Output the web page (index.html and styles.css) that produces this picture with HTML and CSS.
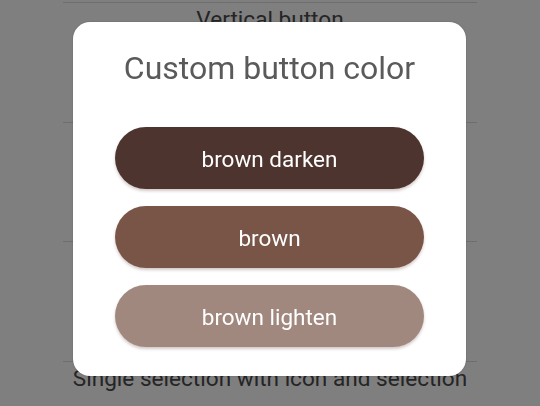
FILE: index.html
```html
<!DOCTYPE html>
<html>
<head>
<meta charset="utf-8">
<link rel="stylesheet" href="styles.css">
</head>
<body>
<div class="page">
  <ul class="list">
    <li class="item">Vertical button</li>
    <li class="item"></li>
    <li class="item"></li>
    <li class="item">Single selection with icon and selection</li>
  </ul>
</div>
<div class="overlay">
  <div class="dialog">
    <h1 class="title">Custom button color</h1>
    <div class="buttons">
      <button class="btn btn-darken">brown darken</button>
      <button class="btn btn-base">brown</button>
      <button class="btn btn-lighten">brown lighten</button>
    </div>
  </div>
</div>
</body>
</html>
```

FILE: styles.css
```css
html, body {
  margin: 0;
  padding: 0;
  background: #ffffff;
  font-family: Roboto, "Liberation Sans", sans-serif;
  overflow: hidden;
}

.page {
  width: 540px;
  height: 406px;
  padding-top: 2px;
  box-sizing: border-box;
  overflow: hidden;
}

.list {
  list-style: none;
  margin: 0 63px;
  padding: 0;
}

.item {
  height: 115.7px;
  border-top: 1px solid #dcdcdc;
  padding-top: 3px;
  box-sizing: content-box;
  font-size: 22.6px;
  color: #4a4a4a;
  text-align: center;
  white-space: nowrap;
}

.overlay {
  position: fixed;
  inset: 0;
  background: rgba(0, 0, 0, 0.5);
}

.dialog {
  position: absolute;
  left: 73px;
  top: 22px;
  width: 393px;
  height: 354px;
  box-sizing: border-box;
  background: #ffffff;
  border-radius: 17px;
  box-shadow: 0 0 2px rgba(0, 0, 0, 0.25);
  padding: 28px 42px 0 42px;
  display: flex;
  flex-direction: column;
}

.title {
  margin: 0;
  font-size: 32px;
  line-height: 36px;
  font-weight: 400;
  color: #5a5a5a;
  text-align: center;
}

.buttons {
  margin-top: 41px;
  display: flex;
  flex-direction: column;
  gap: 17px;
}

.btn {
  height: 62px;
  border: none;
  border-radius: 31px;
  font-family: Roboto, "Liberation Sans", sans-serif;
  font-size: 22.5px;
  color: #ffffff;
  padding: 2px 0 0 0;
  box-shadow: 0 2px 3px rgba(80, 40, 30, 0.25);
}

.btn-darken { background: #4e342e; }
.btn-base { background: #795548; }
.btn-lighten { background: #a1887f; }
```
